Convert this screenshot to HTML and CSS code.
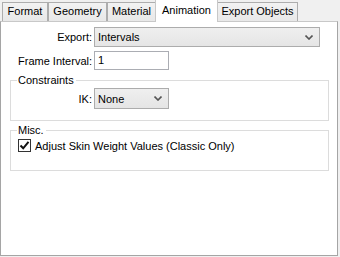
FILE: index.html
```html
<!DOCTYPE html>
<html>
<head>
<meta charset="utf-8">
<link rel="stylesheet" href="styles.css">
</head>
<body>
<div class="tabs">
  <div class="tab t-format">Format</div>
  <div class="tab t-geometry">Geometry</div>
  <div class="tab t-material">Material</div>
  <div class="tab active t-animation">Animation</div>
  <div class="tab t-export">Export Objects</div>
</div>
<div class="panel">
  <div class="form">
    <label class="lbl">Export:</label>
    <div class="combo wide"><span>Intervals</span><svg class="chev" width="8" height="5" viewBox="0 0 8 5"><path d="M0.5 0.5 L4 4 L7.5 0.5" fill="none" stroke="#555" stroke-width="1.6"/></svg></div>
    <label class="lbl">Frame Interval:</label>
    <div class="textbox">1</div>
  </div>
  <fieldset class="group">
    <legend>Constraints</legend>
    <div class="form inner">
      <label class="lbl">IK:</label>
      <div class="combo narrow"><span>None</span><svg class="chev" width="8" height="5" viewBox="0 0 8 5"><path d="M0.5 0.5 L4 4 L7.5 0.5" fill="none" stroke="#555" stroke-width="1.6"/></svg></div>
    </div>
  </fieldset>
  <fieldset class="group misc">
    <legend>Misc.</legend>
    <div class="check-row">
      <span class="checkbox"><svg width="11" height="11" viewBox="0 0 11 11"><path d="M1.5 5.5 L4.2 8.3 L9.5 1.8" fill="none" stroke="#111" stroke-width="2"/></svg></span>
      <span>Adjust Skin Weight Values (Classic Only)</span>
    </div>
  </fieldset>
</div>
</body>
</html>
```
FILE: styles.css
```css
* { box-sizing: border-box; }
html, body { margin: 0; padding: 0; }
body {
  background: #f0f0f0;
  font-family: "Liberation Sans", Arial, sans-serif;
  font-size: 11px;
  color: #000;
  width: 340px;
  height: 257px;
  overflow: hidden;
}
.tabs {
  display: flex;
  align-items: flex-end;
  height: 21px;
  padding-left: 2px;
  position: relative;
  z-index: 1;
}
.tab {
  height: 19px;
  line-height: 17px;
  border: 1px solid #adadad;
  border-bottom: none;
  background: linear-gradient(#f2f2f2, #e8e8e8);
  white-space: nowrap;
  text-align: center;
}
.t-format { width: 46px; }
.t-geometry { width: 59px; }
.t-material { width: 49px; }
.t-animation { width: 63px; }
.t-export { width: 81px; }
.tab.active {
  height: 22px;
  margin-bottom: -1px;
  background: #fff;
  border-color: #c8c8c8;
  line-height: 21px;
  margin-left: -1px;
  margin-right: -1px;
  border-top: none;
  position: relative;
  z-index: 2;
}
.panel {
  width: 338px;
  height: 235px;
  background: #fff;
  border: 1px solid #a5a5a5;
  border-top-color: #c8c8c8;
  padding-top: 5px;
}
.form {
  display: grid;
  grid-template-columns: 91px auto;
  column-gap: 2px;
  row-gap: 4px;
  align-items: center;
  justify-items: start;
}
.lbl { justify-self: end; white-space: nowrap; }
.combo {
  height: 20px;
  border: 1px solid #acacac;
  background: linear-gradient(#efefef, #e5e5e5);
  display: flex;
  align-items: center;
  justify-content: space-between;
  padding: 0 4px 0 3px;
}
.combo.wide { width: 226px; }
.combo.narrow { width: 75px; height: 21px; }
.chev { margin-right: 2px; }
.textbox {
  width: 75px;
  height: 19px;
  border: 1px solid #abadb3;
  background: #fff;
  padding-left: 3px;
  line-height: 17px;
}
.group {
  margin: 4px 8px 0 9px;
  border: 1px solid #dcdcdc;
  padding: 1px 0 11px 0;
}
.group legend {
  padding: 0 2px 0 1px;
  margin-left: 6px;
  line-height: 13px;
}
.form.inner {
  margin-left: -10px;
}
.misc { margin-top: 3px; padding: 2px 0 18px 0; }
.check-row {
  display: flex;
  align-items: center;
  gap: 4px;
  padding-left: 7px;
}
.checkbox {
  width: 13px;
  height: 13px;
  border: 1px solid #333;
  background: #fff;
  display: flex;
  align-items: center;
  justify-content: center;
}
```
